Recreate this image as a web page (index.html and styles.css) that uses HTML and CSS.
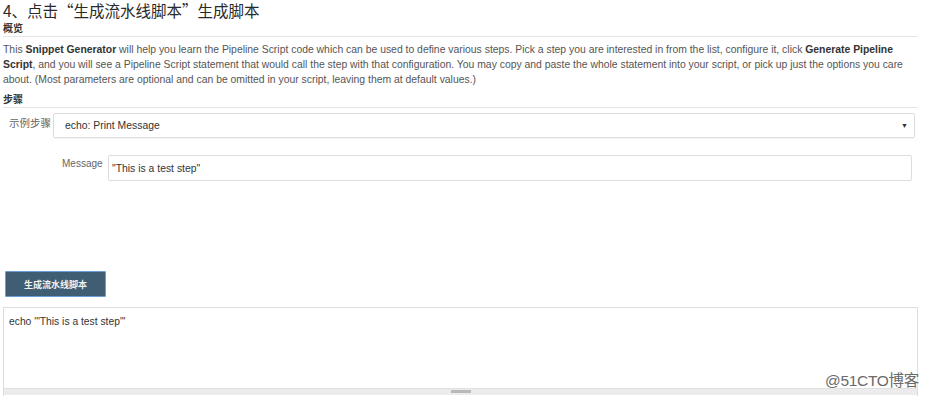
FILE: index.html
```html
<!DOCTYPE html>
<html lang="zh">
<head>
<meta charset="utf-8">
<link rel="stylesheet" href="styles.css">
</head>
<body>
<div class="page">
  <h1 class="title">4、点击“生成流水线脚本”生成脚本</h1>
  <div class="section-head">概览</div>
  <p class="desc">This <b>Snippet Generator</b> will help you learn the Pipeline Script code which can be used to define various steps. Pick a step you are interested in from the list, configure it, click <b>Generate Pipeline Script</b>, and you will see a Pipeline Script statement that would call the step with that configuration. You may copy and paste the whole statement into your script, or pick up just the options you care about. (Most parameters are optional and can be omitted in your script, leaving them at default values.)</p>
  <div class="section-head steps">步骤</div>
  <div class="row step-row">
    <div class="label">示例步骤</div>
    <div class="select">
      <span>echo: Print Message</span>
      <span class="arrow">▼</span>
    </div>
  </div>
  <div class="row msg-row">
    <div class="label">Message</div>
    <div class="input">"This is a test step"</div>
  </div>
  <div class="btn-wrap"><button class="btn">生成流水线脚本</button></div>
  <div class="output">
    <div class="code">echo '"This is a test step"'</div>
    <div class="hscroll"><div class="thumb"></div></div>
    <div class="watermark">@51CTO博客</div>
  </div>
</div>
</body>
</html>
```
FILE: styles.css
```css
* { box-sizing: border-box; }
html, body { margin: 0; padding: 0; background: #fff; }
body {
  font-family: "Liberation Sans", Arial, "Noto Sans CJK SC", sans-serif;
  color: #333;
}
.page { width: 931px; height: 399px; overflow: hidden; padding: 0 13px 0 3px; }
.title {
  margin: 0;
  font-family: "Noto Sans CJK SC", sans-serif;
  font-weight: normal;
  font-size: 15.5px;
  line-height: 21px;
  color: #2a2a2a;
}
.section-head {
  font-family: "Noto Sans CJK SC", sans-serif;
  font-weight: bold;
  font-size: 10px;
  line-height: 13px;
  color: #333;
  padding-bottom: 2px;
  border-bottom: 1px solid #e6e6e6;
}
.desc {
  margin: 5px 0 0;
  font-size: 10.4px;
  line-height: 15px;
  color: #555;
}
.desc b { color: #333; }
.steps { margin-top: 5px; }
.row { display: flex; align-items: flex-start; }
.label {
  font-family: "Liberation Sans", "Noto Sans CJK SC", sans-serif;
  font-size: 10px;
  color: #666;
}
.step-row { margin-top: 5px; padding-left: 6px; }
.step-row .label { width: 44px; padding-top: 2px; font-size: 10.5px; }
.select {
  width: 862px;
  height: 25px;
  border: 1px solid #ddd;
  border-radius: 2px;
  display: flex;
  align-items: center;
  justify-content: space-between;
  padding: 0 6px 0 11px;
  font-size: 10.4px;
  color: #333;
  box-shadow: 0 1px 1px rgba(0,0,0,0.04);
}
.arrow { font-size: 7px; color: #333; }
.msg-row { margin-top: 17px; padding-left: 59px; }
.msg-row .label { width: 46px; padding-top: 3px; }
.input {
  width: 804px;
  height: 26px;
  border: 1px solid #ddd;
  border-radius: 2px;
  display: flex;
  align-items: center;
  padding-left: 3px;
  font-size: 10.4px;
  color: #333;
}
.btn-wrap { margin-top: 90px; padding-left: 2px; }
.btn {
  width: 101px;
  height: 26px;
  border: 1px solid #6a9fd6;
  border-radius: 1px;
  background: #3f5e74;
  color: #f2f2f2;
  font-family: "Noto Sans CJK SC", sans-serif;
  font-weight: bold;
  font-size: 9px;
  padding: 0;
}
.output {
  position: relative;
  margin-top: 10px;
  width: 915px;
  height: 89px;
  border: 1px solid #ddd;
  border-bottom: none;
}
.code {
  height: 80px;
  padding: 8px 0 0 5px;
  font-size: 10.3px;
  color: #333;
}
.hscroll {
  height: 7px;
  background: #ececec;
  border-top: 1px solid #e0e0e0;
  position: relative;
}
.thumb {
  position: absolute;
  left: 447px;
  top: 1px;
  width: 20px;
  height: 3px;
  background: #b8b8b8;
}
.watermark {
  position: absolute;
  right: -2px;
  bottom: 6px;
  font-family: "Liberation Sans", "Noto Sans CJK SC", sans-serif;
  font-size: 15.5px;
  color: #6a6a6a;
  text-shadow: 0 0 2px #fff, 0 0 2px #fff;
  letter-spacing: -0.3px;
}
```
